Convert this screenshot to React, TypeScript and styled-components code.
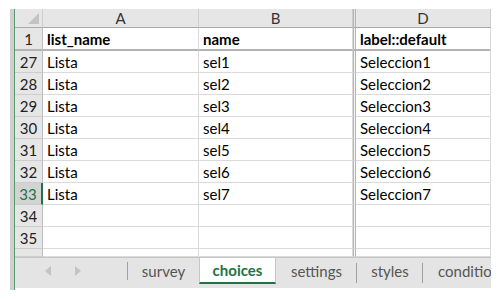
import React from 'react';
import styled, { createGlobalStyle, css } from 'styled-components';

const GlobalStyle = createGlobalStyle`
  html, body {
    margin: 0;
    padding: 0;
    background: #ffffff;
  }
  body {
    font-family: 'Lato', 'Liberation Sans', sans-serif;
  }
`;

const green = '#217346';
const grid = '#dadada';
const headBg = '#e6e6e6';

const Frame = styled.div`
  display: flex;
  margin: 9px 0 0 10px;
  width: 481px;
`;

const Edge = styled.div`
  width: 4px;
  background: #cfcfcf;
  border-right: 1px solid #5b9a70;
  height: 281px;
`;

const Sheet = styled.div`
  flex: 1;
  min-width: 0;
  display: flex;
  flex-direction: column;
  overflow: hidden;
`;

const Grid = styled.div`
  display: grid;
  grid-template-columns: 28px 156px 154px 3px 135px;
`;

const ColHead = styled.div`
  height: 19px;
  background: ${headBg};
  border-right: 1px solid #cdcdcd;
  border-bottom: 1px solid #a8a8a8;
  box-sizing: border-box;
  display: flex;
  align-items: center;
  justify-content: center;
  color: #333;
  font-size: 15px;
`;

const Corner = styled(ColHead)`
  position: relative;
  &::after {
    content: '';
    position: absolute;
    right: 3px;
    bottom: 3px;
    border-style: solid;
    border-width: 0 0 11px 11px;
    border-color: transparent transparent #c4c4c4 transparent;
  }
`;

const Divider = styled.div<{ $freeze?: boolean; $head?: boolean; $h: number }>`
  height: ${(p) => p.$h}px;
  box-sizing: border-box;
  border-left: 1px solid #b4b4b4;
  border-right: 1px solid #b4b4b4;
  background: ${(p) => (p.$head ? headBg : '#f7f7f7')};
  border-bottom: ${(p) =>
    p.$head ? '1px solid #a8a8a8' : p.$freeze ? '2px solid #b3b3b3' : `1px solid ${grid}`};
`;

const RowHead = styled.div<{ $active?: boolean; $freeze?: boolean; $h: number }>`
  height: ${(p) => p.$h}px;
  box-sizing: border-box;
  background: ${(p) => (p.$active ? '#d3d3d3' : headBg)};
  color: ${(p) => (p.$active ? green : '#222')};
  border-bottom: ${(p) => (p.$freeze ? '2px solid #b3b3b3' : '1px solid #cdcdcd')};
  border-right: ${(p) => (p.$active ? `2px solid ${green}` : '1px solid #bdbdbd')};
  display: flex;
  align-items: center;
  justify-content: center;
  font-size: 15px;
`;

const Cell = styled.div<{ $bold?: boolean; $freeze?: boolean; $h: number }>`
  height: ${(p) => p.$h}px;
  box-sizing: border-box;
  border-bottom: ${(p) => (p.$freeze ? '2px solid #b3b3b3' : `1px solid ${grid}`)};
  border-right: 1px solid ${grid};
  display: flex;
  align-items: center;
  padding-left: 4px;
  font-size: 15px;
  color: #000;
  white-space: nowrap;
  overflow: hidden;
  ${(p) =>
    p.$bold &&
    css`
      font-weight: 700;
    `}
`;

const TabBar = styled.div`
  display: flex;
  align-items: stretch;
  height: 31px;
  background: #e4e4e4;
  border-top: 1px solid #c6c6c6;
  box-sizing: border-box;
  border-bottom: 4px solid #e4e4e4;
  overflow: hidden;
`;

const Nav = styled.div`
  width: 113px;
  flex-shrink: 0;
  display: flex;
  align-items: center;
  padding-left: 30px;
  gap: 24px;
  box-sizing: border-box;
  border-right: 1px solid #a0a0a0;
  margin: 4px 0;
`;

const Tab = styled.div<{ $w: number; $active?: boolean; $sep?: boolean; $clip?: boolean }>`
  width: ${(p) => p.$w}px;
  flex-shrink: 0;
  display: flex;
  align-items: center;
  justify-content: ${(p) => (p.$clip ? 'flex-start' : 'center')};
  padding-left: ${(p) => (p.$clip ? '15px' : '0')};
  font-size: 15px;
  color: #555;
  position: relative;
  box-sizing: border-box;
  white-space: nowrap;
  ${(p) =>
    p.$sep &&
    css`
      &::after {
        content: '';
        position: absolute;
        right: 0;
        top: 5px;
        bottom: 1px;
        width: 1px;
        background: #a0a0a0;
      }
    `}
  ${(p) =>
    p.$active &&
    css`
      background: #fff;
      color: ${green};
      font-weight: 700;
      margin-top: -1px;
      border-left: 1px solid #c6c6c6;
      border-right: 1px solid #c6c6c6;
      border-bottom: 2px solid ${green};
    `}
`;

const Arrow = ({ dir }: { dir: 'l' | 'r' }) => (
  <svg width="6" height="10" viewBox="0 0 6 10">
    <path d={dir === 'l' ? 'M6 0 L0 5 L6 10 Z' : 'M0 0 L6 5 L0 10 Z'} fill="#c3c3c3" />
  </svg>
);

const rows: [string, string, string, string][] = [
  ['27', 'Lista', 'sel1', 'Seleccion1'],
  ['28', 'Lista', 'sel2', 'Seleccion2'],
  ['29', 'Lista', 'sel3', 'Seleccion3'],
  ['30', 'Lista', 'sel4', 'Seleccion4'],
  ['31', 'Lista', 'sel5', 'Seleccion5'],
  ['32', 'Lista', 'sel6', 'Seleccion6'],
  ['33', 'Lista', 'sel7', 'Seleccion7'],
  ['34', '', '', ''],
  ['35', '', '', ''],
];

export default function App() {
  return (
    <>
      <GlobalStyle />
      <Frame>
        <Edge />
        <Sheet>
          <Grid>
            <Corner />
            <ColHead>A</ColHead>
            <ColHead>B</ColHead>
            <Divider $h={19} $head />
            <ColHead>D</ColHead>

            <RowHead $h={23} $freeze>1</RowHead>
            <Cell $h={23} $bold $freeze>list_name</Cell>
            <Cell $h={23} $bold $freeze>name</Cell>
            <Divider $h={23} $freeze />
            <Cell $h={23} $bold $freeze>label::default</Cell>

            {rows.map(([n, a, b, d]) => (
              <React.Fragment key={n}>
                <RowHead $h={22} $active={n === '33'}>{n}</RowHead>
                <Cell $h={22}>{a}</Cell>
                <Cell $h={22}>{b}</Cell>
                <Divider $h={22} />
                <Cell $h={22}>{d}</Cell>
              </React.Fragment>
            ))}

            <RowHead $h={8} />
            <Cell $h={8} />
            <Cell $h={8} />
            <Divider $h={8} />
            <Cell $h={8} />
          </Grid>
          <TabBar>
            <Nav>
              <Arrow dir="l" />
              <Arrow dir="r" />
            </Nav>
            <Tab $w={71}>survey</Tab>
            <Tab $w={77} $active>choices</Tab>
            <Tab $w={81} $sep>settings</Tab>
            <Tab $w={66} $sep>styles</Tab>
            <Tab $w={100} $clip>conditions</Tab>
          </TabBar>
        </Sheet>
      </Frame>
    </>
  );
}
